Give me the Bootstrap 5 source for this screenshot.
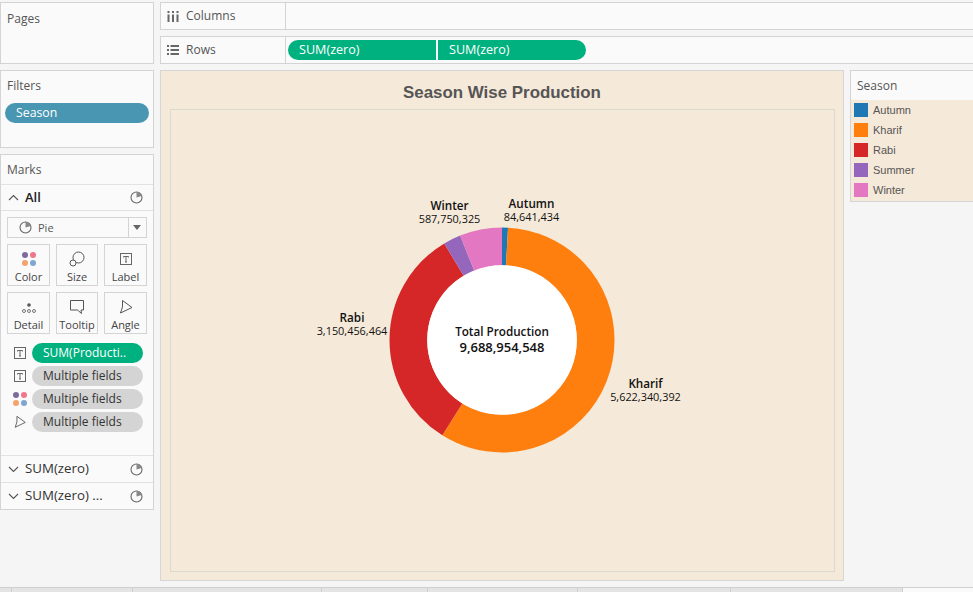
<!DOCTYPE html>
<html lang="en">
<head>
<meta charset="utf-8">
<title>Season Wise Production</title>
<link href="https://cdn.jsdelivr.net/npm/bootstrap@5.3.0/dist/css/bootstrap.min.css" rel="stylesheet">
<style>
html,body{height:592px;overflow:hidden}
body{background:#f5f5f5;font-family:"Open Sans","Liberation Sans",sans-serif;font-size:12px;color:#555;line-height:1}
.app-shell{height:592px}
.work-area{padding-top:2px;height:587px;flex:none}
.left-col{width:154px;flex:none;gap:6px}
.right-col{margin-left:6px;gap:6px}
.panel-box{background:#fafafa;border:1px solid #d4d4d4}
.panel-title{padding:0 6px;font-size:12px;color:#555}
.pages-box{height:62px}
.pages-box .panel-title{padding-top:10px}
.filters-box{height:78px}
.filters-box .panel-title{padding-top:9px}
.pill{height:20px;display:flex;align-items:center;font-size:12px;color:#fff;padding-left:11px;white-space:nowrap}
.pill-blue{background:#4996b2;margin:11px 4px 0;font-size:12.3px}
.pill-green{background:#00b180}
.pill-grey{background:#d4d4d4;color:#333}
.marks-box{height:356px}
.marks-head{height:30px;padding:9px 6px 0;border-bottom:1px solid #e2e2e2}
.card-row{height:27px;padding:0 10px 0 7px;border-bottom:1px solid #e2e2e2;color:#333;font-size:13.3px;gap:6px}
.card-row.row-all{height:26px;font-weight:600;color:#222;font-size:13px}
.card-row:last-child{border-bottom:0;height:26px}
.pie-ic{margin-left:auto;flex:none}
.card-chev{flex:none;width:11px}
.marks-body{padding:6px 6px 0;height:245px;border-bottom:1px solid #e2e2e2}
.type-select{height:21px;border:1px solid #d4d4d4;background:#fafafa;font-size:11px;color:#555}
.type-label{padding-left:11px;gap:6px;width:121px;border-right:1px solid #d4d4d4;height:100%}
.type-caret{width:0;height:0;border:4px solid transparent;border-top:5px solid #666;border-bottom:0;margin-left:4px}
.mark-grid{display:grid;grid-template-columns:43px 42px 43px;gap:6px;margin-top:6px}
.mark-btn{height:42px;border:1px solid #d4d4d4;background:#fafafa;font-size:11px;color:#444;padding-top:6px}
.mark-btn svg{height:16px;flex:none;display:block}
.mark-btn span{margin-top:4px}
.enc-list{margin-top:9px;gap:3px}
.enc-row{height:20px}
.enc-ic{width:25px;flex:none;display:flex;justify-content:center}
.enc-row .pill{width:111px}
.shelf{height:28px}
.shelf-head{width:125px;flex:none;height:100%;border-right:1px solid #d4d4d4;padding-left:6px;gap:7px;font-size:12px;color:#555}
.shelf-pills{padding-left:2px;gap:2px}
.shelf-pills .pill{width:148px;font-size:12.6px}
.pill-l{border-radius:10px 0 0 10px}
.pill-r{border-radius:0 10px 10px 0}
.viz-row{gap:6px}
.viz-box{width:684px;height:511px;background:#f5e9d9;border:1px solid #d6d6d6;flex:none}
.viz-title{height:38px;font:bold 16.9px "Liberation Sans",sans-serif;color:#555;padding-top:5px}
.viz-frame{margin:0 8px 0 9px;height:463px;border:1px solid #dad9cf;position:relative}
.viz-frame svg{display:block}
.chart-label{position:absolute;width:120px;text-align:center;color:#111}
.lab-name{font-weight:600;font-size:11.7px;line-height:13px}
.lab-val{font-size:10.9px;line-height:13px}
.lab-winter{left:218.5px;top:89px}
.lab-autumn{left:300.5px;top:87px}
.lab-rabi{left:121px;top:201px}
.lab-kharif{left:414.5px;top:267px}
.lab-total{left:271px;top:214px}
.lab-mid-a{font-weight:600;font-size:11.7px;line-height:14px}
.lab-mid-b{font-weight:600;font-size:13px;line-height:18px}
.legend-box{height:132px;flex-grow:1;border:1px solid #d4d4d4;border-right:0;background:#fafafa}
.legend-head{height:29px;padding:9px 6px 0}
.legend-body{height:101px;background:#f5e9d9;padding:3px;gap:6px}
.legend-item{height:14px;gap:5px;font:11px "Liberation Sans",sans-serif;color:#555}
.legend-swatch{width:14px;height:14px;flex:none}
.sw-autumn{background:#1f77b4}
.sw-kharif{background:#ff7f0e}
.sw-rabi{background:#d62728}
.sw-summer{background:#9467bd}
.sw-winter{background:#e377c2}
.tab-strip{height:5px;flex:none;border-top:1px solid #cfcfcf;background:#e4e4e4}
.tab-strip>div{border-right:1px solid #cfcfcf;height:100%}
.t1{width:12px}.t2{width:121px}.t3{width:189px}.t4{width:106px}.t5{width:150px}.t6{width:153px}.t7{width:172px}
.tab-on{background:#fafafa;flex-grow:1;border-right:0!important}
</style>
</head>
<body>
<svg width="0" height="0" class="position-absolute">
  <defs>
    <g id="ic-pie"><circle cx="6.500" cy="6.500" r="5.500" fill="none" stroke="#666" stroke-width="1.100"/><path d="M6.500 6.500V1a5.500 5.500 0 0 1 5.300 4z" fill="#888"/></g>
    <g id="ic-label"><rect x="1.500" y="1.500" width="11" height="11" fill="none" stroke="#666"/><path d="M4.500 5.500V4.500h5v1M7 4.500v5.500M6 10h2" fill="none" stroke="#666"/></g>
    <g id="ic-color"><circle cx="4" cy="4" r="3" fill="#7f6a9e"/><circle cx="12" cy="4" r="3" fill="#f0768b"/><circle cx="4" cy="12" r="3" fill="#f4a36f"/><circle cx="12" cy="12" r="3" fill="#7fa6cf"/></g>
    <path id="ic-angle" d="M4.500 1.500L14 8.500 2.500 14Q5.500 8 4.500 1.500z" fill="none" stroke="#555"/>
  </defs>
</svg>
<div class="app-shell d-flex flex-column">
<div class="work-area d-flex">
  <div class="left-col d-flex flex-column">
    <div class="panel-box pages-box"><div class="panel-title">Pages</div></div>
    <div class="panel-box filters-box"><div class="panel-title">Filters</div><div class="pill pill-blue rounded-pill">Season</div></div>
    <div class="panel-box marks-box">
      <div class="marks-head">Marks</div>
      <div class="card-row row-all d-flex align-items-center">
        <svg class="card-chev" width="11" height="7" viewBox="0 0 11 7"><path d="M1 6l4.500-4.500L10 6" fill="none" stroke="#555" stroke-width="1.100"/></svg>
        <span>All</span>
        <svg class="pie-ic" width="13" height="13" viewBox="0 0 13 13"><use href="#ic-pie"/></svg>
      </div>
      <div class="marks-body">
        <div class="type-select d-flex align-items-center">
          <div class="type-label d-flex align-items-center">
            <svg width="13" height="13" viewBox="0 0 13 13"><use href="#ic-pie"/></svg>
            <span>Pie</span>
          </div>
          <div class="type-caret"></div>
        </div>
        <div class="mark-grid">
          <div class="mark-btn d-flex flex-column align-items-center">
            <svg width="16" height="16" viewBox="0 0 16 16"><use href="#ic-color"/></svg>
            <span>Color</span>
          </div>
          <div class="mark-btn d-flex flex-column align-items-center">
            <svg width="16" height="16" viewBox="0 0 16 16"><circle cx="9.500" cy="6.500" r="5.500" fill="none" stroke="#555"/><circle cx="4" cy="12" r="3" fill="#fafafa" stroke="#555"/></svg>
            <span>Size</span>
          </div>
          <div class="mark-btn d-flex flex-column align-items-center">
            <svg width="16" height="16" viewBox="-1 -1 16 16"><use href="#ic-label"/></svg>
            <span>Label</span>
          </div>
          <div class="mark-btn d-flex flex-column align-items-center">
            <svg width="16" height="16" viewBox="0 0 16 16"><circle cx="8" cy="6" r="1.800" fill="#555"/><circle cx="3" cy="12" r="1.500" fill="none" stroke="#555" stroke-width=".8"/><circle cx="8" cy="12" r="1.500" fill="none" stroke="#555" stroke-width=".8"/><circle cx="13" cy="12" r="1.500" fill="none" stroke="#555" stroke-width=".8"/></svg>
            <span>Detail</span>
          </div>
          <div class="mark-btn d-flex flex-column align-items-center">
            <svg width="16" height="16" viewBox="0 0 16 16"><path d="M1.500 1.500h13v9.500h-2.500l.5 3.500-4-3.500h-7z" fill="none" stroke="#555"/></svg>
            <span>Tooltip</span>
          </div>
          <div class="mark-btn d-flex flex-column align-items-center">
            <svg width="16" height="16" viewBox="0 0 16 16"><use href="#ic-angle"/></svg>
            <span>Angle</span>
          </div>
        </div>
        <div class="enc-list d-flex flex-column">
          <div class="enc-row d-flex align-items-center">
            <div class="enc-ic"><svg width="14" height="14" viewBox="0 0 14 14"><use href="#ic-label"/></svg></div>
            <div class="pill pill-green rounded-pill">SUM(Producti..</div>
          </div>
          <div class="enc-row d-flex align-items-center">
            <div class="enc-ic"><svg width="14" height="14" viewBox="0 0 14 14"><use href="#ic-label"/></svg></div>
            <div class="pill pill-grey rounded-pill">Multiple fields</div>
          </div>
          <div class="enc-row d-flex align-items-center">
            <div class="enc-ic"><svg width="16" height="16" viewBox="0 0 16 16"><use href="#ic-color"/></svg></div>
            <div class="pill pill-grey rounded-pill">Multiple fields</div>
          </div>
          <div class="enc-row d-flex align-items-center">
            <div class="enc-ic"><svg width="14" height="14" viewBox="0 0 16 16"><use href="#ic-angle"/></svg></div>
            <div class="pill pill-grey rounded-pill">Multiple fields</div>
          </div>
        </div>
      </div>
      <div class="card-row d-flex align-items-center">
        <svg class="card-chev" width="11" height="7" viewBox="0 0 11 7"><path d="M1 1l4.500 4.500L10 1" fill="none" stroke="#555" stroke-width="1.100"/></svg>
        <span>SUM(zero)</span>
        <svg class="pie-ic" width="13" height="13" viewBox="0 0 13 13"><use href="#ic-pie"/></svg>
      </div>
      <div class="card-row d-flex align-items-center">
        <svg class="card-chev" width="11" height="7" viewBox="0 0 11 7"><path d="M1 1l4.500 4.500L10 1" fill="none" stroke="#555" stroke-width="1.100"/></svg>
        <span>SUM(zero) ...</span>
        <svg class="pie-ic" width="13" height="13" viewBox="0 0 13 13"><use href="#ic-pie"/></svg>
      </div>
    </div>
  </div>
  <div class="right-col flex-grow-1 d-flex flex-column">
    <div class="panel-box shelf d-flex align-items-center border-end-0">
      <div class="shelf-head d-flex align-items-center">
        <svg width="12" height="11" viewBox="-0.500 0 12 11"><path d="M0 0h2v2H0zM4.500 0h2v2h-2zM9 0h2v2H9zM0 3.500h2V11H0zM4.500 3.500h2V11h-2zM9 3.500h2V11H9z" fill="#666"/></svg>
        <span>Columns</span>
      </div>
    </div>
    <div class="panel-box shelf d-flex align-items-center border-end-0">
      <div class="shelf-head d-flex align-items-center">
        <svg width="12" height="10" viewBox="0 0 12 10"><path d="M0 0h2v2H0zM3.500 0H12v2H3.500zM0 4h2v2H0zM3.500 4H12v2H3.500zM0 8h2v2H0zM3.500 8H12v2H3.500z" fill="#666"/></svg>
        <span>Rows</span>
      </div>
      <div class="shelf-pills d-flex">
        <div class="pill pill-green pill-l">SUM(zero)</div>
        <div class="pill pill-green pill-r">SUM(zero)</div>
      </div>
    </div>
    <div class="viz-row d-flex">
      <div class="viz-box">
        <div class="viz-title d-flex justify-content-center align-items-center">Season Wise Production</div>
        <div class="viz-frame">
          <svg width="663" height="461" viewBox="0 0 663 461">
            <g transform="rotate(-90 331 230)" fill="none" stroke-width="37.700">
              <circle cx="331" cy="230" r="93.650" pathLength="100" stroke="#1f77b4" stroke-dasharray="0.874 99.126" stroke-dashoffset="0"/>
              <circle cx="331" cy="230" r="93.650" pathLength="100" stroke="#ff7f0e" stroke-dasharray="58.028 41.972" stroke-dashoffset="-0.874"/>
              <circle cx="331" cy="230" r="93.650" pathLength="100" stroke="#d62728" stroke-dasharray="32.516 67.484" stroke-dashoffset="-58.902"/>
              <circle cx="331" cy="230" r="93.650" pathLength="100" stroke="#9467bd" stroke-dasharray="2.516 97.484" stroke-dashoffset="-91.418"/>
              <circle cx="331" cy="230" r="93.650" pathLength="100" stroke="#e377c2" stroke-dasharray="6.066 93.934" stroke-dashoffset="-93.934"/>
            </g>
            <circle cx="331" cy="230" r="74.800" fill="#fff"/>
          </svg>
          <div class="chart-label lab-winter"><div class="lab-name">Winter</div><div class="lab-val">587,750,325</div></div>
          <div class="chart-label lab-autumn"><div class="lab-name">Autumn</div><div class="lab-val">84,641,434</div></div>
          <div class="chart-label lab-rabi"><div class="lab-name">Rabi</div><div class="lab-val">3,150,456,464</div></div>
          <div class="chart-label lab-kharif"><div class="lab-name">Kharif</div><div class="lab-val">5,622,340,392</div></div>
          <div class="chart-label lab-total"><div class="lab-mid-a">Total Production</div><div class="lab-mid-b">9,688,954,548</div></div>
        </div>
      </div>
      <div class="legend-box">
        <div class="legend-head">Season</div>
        <div class="legend-body d-flex flex-column">
          <div class="legend-item d-flex align-items-center"><div class="legend-swatch sw-autumn"></div>Autumn</div>
          <div class="legend-item d-flex align-items-center"><div class="legend-swatch sw-kharif"></div>Kharif</div>
          <div class="legend-item d-flex align-items-center"><div class="legend-swatch sw-rabi"></div>Rabi</div>
          <div class="legend-item d-flex align-items-center"><div class="legend-swatch sw-summer"></div>Summer</div>
          <div class="legend-item d-flex align-items-center"><div class="legend-swatch sw-winter"></div>Winter</div>
        </div>
      </div>
    </div>
  </div>
</div>
<div class="tab-strip d-flex">
  <div class="t1"></div><div class="t2"></div><div class="t3"></div><div class="t4"></div><div class="t5"></div><div class="t6"></div><div class="t7"></div><div class="tab-on"></div>
</div>
</div>
</body>
</html>
